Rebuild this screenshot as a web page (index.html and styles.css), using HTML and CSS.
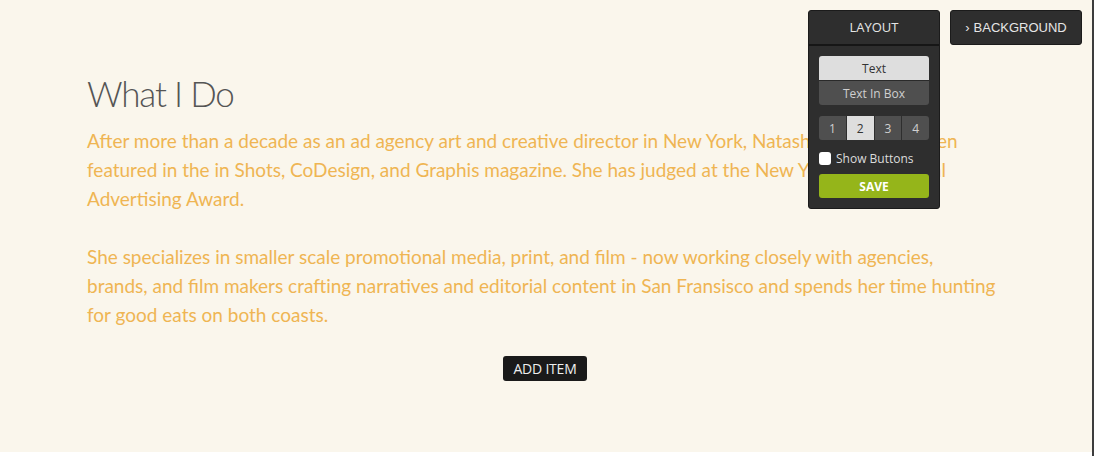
FILE: index.html
```html
<!DOCTYPE html>
<html lang="en">
<head>
    <meta charset="UTF-8">
    <meta name="viewport" content="width=device-width, initial-scale=1.0">
    <title>What I Do</title>
    <link rel="stylesheet" href="styles.css">
</head>
<body>

    <div class="page">
        <div class="content">
            <h1>What I Do</h1>
            <p>After more than a decade as an ad agency art and creative director in New York, Natasha's work has been featured in the in Shots, CoDesign, and Graphis magazine. She has judged at the New York International Advertising Award.</p>
            <p>She specializes in smaller scale promotional media, print, and film - now working closely with agencies,<br>
                brands, and film makers crafting narratives and editorial content in San Fransisco and spends her time hunting for good eats on both coasts.</p>
            <div class="actions">
                <button class="add-btn">ADD ITEM</button>
            </div>
        </div>

        <div class="toolbar">
            <div class="panel">
                <div class="panel-head">LAYOUT</div>
                <div class="panel-body">
                    <div class="choice">
                        <button class="choice-btn active">Text</button>
                        <button class="choice-btn">Text In Box</button>
                    </div>
                    <div class="cols">
                        <button class="col-btn">1</button>
                        <button class="col-btn active">2</button>
                        <button class="col-btn">3</button>
                        <button class="col-btn">4</button>
                    </div>
                    <label class="check">
                        <span class="box"></span>
                        Show Buttons
                    </label>
                    <button class="save-btn">SAVE</button>
                </div>
            </div>
            <button class="bg-btn"><span class="chev">›</span> BACKGROUND</button>
        </div>
    </div>

</body>
</html>
```

FILE: styles.css
```css
* {
    margin: 0;
    padding: 0;
    box-sizing: border-box;
}

body {
    background: #fff;
    border-right: 2px solid #3d3d3d;
    min-height: 100vh;
    font-family: 'Lato', sans-serif;
}

.page {
    position: relative;
    height: 452px;
    background: #faf6ec;
}

.content {
    width: 1003px;
    padding: 70px 0 0 87px;
}

h1 {
    font-size: 35px;
    font-weight: 300;
    color: #555;
    line-height: 46px;
    margin-bottom: 10px;
    letter-spacing: -1.2px;
}

p {
    max-width: 930px;
    font-size: 19px;
    line-height: 29px;
    color: #efb553;
    margin-bottom: 29px;
}

.actions {
    display: flex;
    justify-content: center;
    margin-top: -2px;
}

.add-btn {
    background: #1a1a1a;
    color: #eee;
    border: none;
    border-radius: 3px;
    font-family: 'Open Sans', sans-serif;
    font-size: 14px;
    padding: 0 10px;
    height: 25px;
    letter-spacing: -0.2px;
}

/* editor toolbar */
.toolbar {
    position: absolute;
    top: 10px;
    right: 10px;
    display: flex;
    align-items: flex-start;
    gap: 10px;
    font-family: 'Open Sans', sans-serif;
}

.panel,
.bg-btn {
    width: 132px;
    background: #2e2e2e;
    border: 1px solid #1b1b1b;
    border-radius: 3px;
}

.panel-head,
.bg-btn {
    height: 35px;
    color: #e6e6e6;
    font-size: 13px;
    display: flex;
    align-items: center;
    justify-content: center;
}

.panel-head {
    border-bottom: 2px solid #161616;
    height: 35px;
    padding-bottom: 2px;
}

.bg-btn .chev {
    margin-right: 4px;
}

.panel-body {
    padding: 10px 10px 10px;
}

.choice {
    display: flex;
    flex-direction: column;
    gap: 1px;
    background: #2a2a2a;
    border-radius: 3px;
    overflow: hidden;
}

.choice-btn,
.col-btn {
    border: none;
    height: 24px;
    font-family: 'Open Sans', sans-serif;
    font-size: 12px;
    background: #4f4f4f;
    color: #d0d0d0;
}

.choice-btn.active,
.col-btn.active {
    background: #dedede;
    color: #333;
}

.cols {
    display: grid;
    grid-template-columns: repeat(4, 1fr);
    gap: 1px;
    margin-top: 11px;
    border-radius: 3px;
    overflow: hidden;
}

.check {
    display: flex;
    align-items: center;
    gap: 5px;
    margin-top: 10px;
    color: #dcdcdc;
    font-size: 12px;
}

.box {
    width: 12px;
    height: 13px;
    background: #fff;
    border-radius: 3px;
}

.save-btn {
    display: block;
    width: 100%;
    height: 24px;
    margin-top: 7px;
    border: none;
    border-radius: 3px;
    background: #95b51a;
    color: #fff;
    font-family: 'Open Sans', sans-serif;
    font-weight: 700;
    font-size: 12px;
}
```
